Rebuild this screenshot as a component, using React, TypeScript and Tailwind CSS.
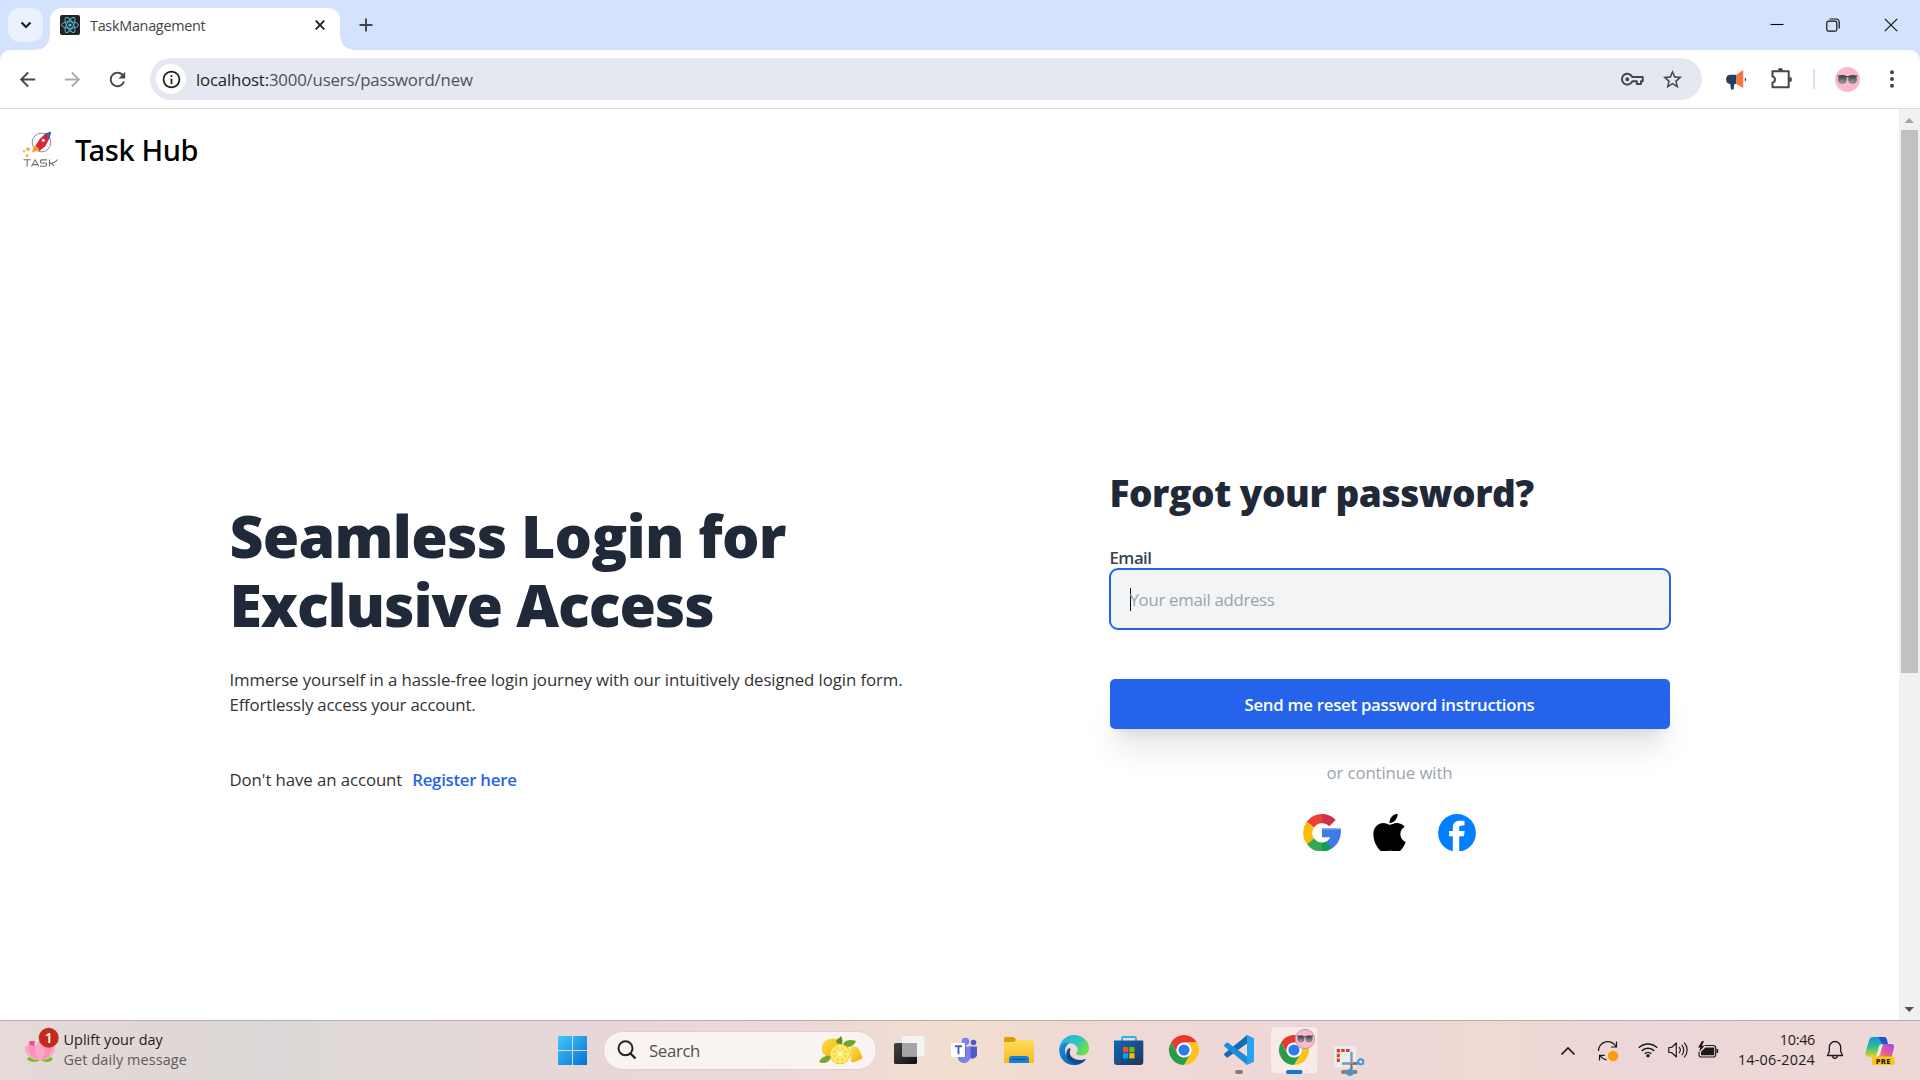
import type { ReactNode } from "react";
import { FaApple } from "react-icons/fa";

const REACT_BLUE = "#58c4dc";

function Favicon() {
  return (
    <svg viewBox="0 0 20 20" className="h-5 w-5">
      <rect width="20" height="20" rx="2" fill="#222" />
      <g fill="none" stroke={REACT_BLUE} strokeWidth="0.9">
        <ellipse cx="10" cy="10" rx="8.4" ry="3.3" />
        <ellipse cx="10" cy="10" rx="8.4" ry="3.3" transform="rotate(60 10 10)" />
        <ellipse cx="10" cy="10" rx="8.4" ry="3.3" transform="rotate(120 10 10)" />
      </g>
      <circle cx="10" cy="10" r="1.6" fill={REACT_BLUE} />
    </svg>
  );
}

function MaterialIcon({ d, className }: { d: string; className: string }) {
  return (
    <svg viewBox="0 0 24 24" fill="currentColor" className={className}>
      <path d={d} />
    </svg>
  );
}

const ARROW_BACK = "M20 11H7.83l5.59-5.59L12 4l-8 8 8 8 1.41-1.41L7.83 13H20v-2z";
const ARROW_FORWARD = "M12 4l-1.41 1.41L16.17 11H4v2h12.17l-5.58 5.59L12 20l8-8z";
const RELOAD =
  "M17.65 6.35C16.2 4.9 14.21 4 12 4c-4.42 0-7.99 3.58-7.99 8s3.57 8 7.99 8c3.73 0 6.84-2.55 7.73-6h-2.08c-.82 2.33-3.04 4-5.65 4-3.31 0-6-2.69-6-6s2.69-6 6-6c1.66 0 3.14.69 4.22 1.78L13 11h7V4l-2.35 2.35z";
const STAR =
  "M22 9.24l-7.19-.62L12 2 9.19 8.63 2 9.24l5.46 4.73L5.82 21 12 17.27 18.18 21l-1.63-7.03L22 9.24zM12 15.4l-3.76 2.27 1-4.28-3.32-2.88 4.38-.38L12 6.1l1.71 4.04 4.38.38-3.32 2.88 1 4.28L12 15.4z";
const INFO =
  "M11 7h2v2h-2zm0 4h2v6h-2zm1-9C6.48 2 2 6.48 2 12s4.480 10 10 10 10-4.480 10-10S17.520 2 12 2zm0 18c-4.410 0-8-3.590-8-8s3.590-8 8-8 8 3.590 8 8-3.590 8-8 8z";

function Glasses() {
  return (
    <>
      <defs>
        <linearGradient id="lens" x1="0" y1="0" x2="0" y2="1">
          <stop offset="0" stopColor="#2e3436" />
          <stop offset="1" stopColor="#a3acac" />
        </linearGradient>
      </defs>
      <circle cx="12.500" cy="12.500" r="12.500" fill="#f8b9cf" />
      <path d="M2.500 9h7.500c.8 0 1.300 1 2.500 1s1.700-1 2.500-1h7.500" fill="none" stroke="#2a2a2a" strokeWidth="1.200" />
      <circle cx="7.400" cy="12.300" r="4" fill="url(#lens)" stroke="#555" strokeWidth=".7" />
      <circle cx="17.600" cy="12.300" r="4" fill="url(#lens)" stroke="#555" strokeWidth=".7" />
    </>
  );
}

function TabStrip() {
  return (
    <div className="flex h-[50px] items-end">
      <div className="mb-2 ml-2 flex h-[34px] w-[35px] items-center justify-center rounded-xl bg-[#ebf1fe]">
        <svg viewBox="0 0 12 8" className="h-2 w-3" fill="none" stroke="#1f1f1f" strokeWidth="2.200">
          <path d="M1.500 1.500 6 6l4.500-4.500" />
        </svg>
      </div>
      <div className="flex items-end">
        <div className="-ml-[7px] h-[14px] w-[14px] bg-[radial-gradient(circle_at_0_0,transparent_13.500px,white_14px)]" />
        <div className="flex h-[42px] w-[290px] items-center rounded-t-xl bg-white pb-[8px]">
          <div className="ml-2.5">
            <Favicon />
          </div>
          <span className="ml-2.5 flex-1 pt-px text-[14.400px] tracking-[-0.280px] text-[#454545]">TaskManagement</span>
          <svg viewBox="0 0 10 10" className="mr-[15px] h-2.5 w-2.5" stroke="#1f1f1f" strokeWidth="1.900">
            <path d="M.7.700l8.600 8.600M9.300.700.7 9.300" />
          </svg>
        </div>
        <div className="h-[14px] w-[14px] bg-[radial-gradient(circle_at_100%_0,transparent_13.500px,white_14px)]" />
      </div>
      <svg viewBox="0 0 14 14" className="mb-[18px] ml-[4.500px] h-3.5 w-3.5" stroke="#444" strokeWidth="1.900">
        <path d="M7 .5v13M.5 7h13" />
      </svg>
      <div className="mb-[18px] ml-auto flex items-center">
        <svg viewBox="0 0 14 14" className="h-3.5 w-3.5" stroke="#000" strokeWidth="1.100">
          <path d="M.5 6.500h13" />
        </svg>
        <svg viewBox="0 0 14 14" className="ml-[42px] h-3.5 w-3.5" fill="none" stroke="#111" strokeWidth="1.200">
          <rect x=".8" y="3.200" width="10" height="10" rx="1.800" />
          <path d="M3.500 1h6.700a3 3 0 0 1 3 3v6.500" />
        </svg>
        <svg viewBox="0 0 14 14" className="ml-11 mr-[22px] h-3.5 w-3.5" stroke="#111" strokeWidth="1.200">
          <path d="M.8.800l12.400 12.400M13.200.800.8 13.200" />
        </svg>
      </div>
    </div>
  );
}

function Toolbar() {
  return (
    <div className="flex h-[59px] items-center rounded-t-[10px] border-b border-[#dcdcdc] bg-white text-[#474747]">
      <MaterialIcon d={ARROW_BACK} className="ml-4 h-[23px] w-[23px]" />
      <MaterialIcon d={ARROW_FORWARD} className="ml-[22px] h-[23px] w-[23px] text-[#ababab]" />
      <MaterialIcon d={RELOAD} className="ml-[22px] h-[23px] w-[23px]" />
      <div className="ml-[21px] flex h-[42px] w-[1552px] items-center rounded-full bg-[#e5e8f1]">
        <div className="ml-1.5 flex h-[30px] w-[30px] items-center justify-center rounded-full bg-white">
          <MaterialIcon d={INFO} className="h-[21px] w-[21px] text-[#1f1f1f]" />
        </div>
        <span className="ml-2.5 flex-1 pt-px text-[16.800px] tracking-[-0.180px] text-[#4f5257]">
          <span className="text-[#1f1f1f]">localhost:</span>3000/users/password/new
        </span>
        <svg viewBox="0 0 24 16" className="mr-[17px] h-4 w-6" fill="none" stroke="#474747" strokeWidth="2">
          <path d="M12.300 6h10.400v4.300h-1.700v2.700h-4.200v-2.700h-4.500A5.400 5.400 0 1 1 12.300 6z" strokeLinejoin="round" />
          <circle cx="7.300" cy="8.200" r="1.300" fill="#474747" stroke="none" />
          <circle cx="7.300" cy="8.200" r="1" />
        </svg>
        <MaterialIcon d={STAR} className="mr-[18px] h-[23px] w-[23px]" />
      </div>
      <svg viewBox="0 0 22 22" className="ml-[23px] mt-0.5 h-[22px] w-[22px]">
        <path d="M5 5.700h6.500v9.300H9.300l-.6 5.500H6l-.8-5.500A4.700 4.700 0 0 1 5 5.700z" fill="#25405a" />
        <path d="M11.500 5.700 18.200 1v18l-6.700-4z" fill="#ff6f3c" />
        <path d="M19.800 8.500a2 2 0 0 1 0 3.800z" fill="#25405a" />
      </svg>
      <svg viewBox="0 0 24 24" className="ml-[22px] h-6 w-6" fill="none" stroke="#474747" strokeWidth="2">
        <path d="M3.500 4.300h16.200v16H3.500v-4.500a3.300 3.300 0 0 0 0-6.400z" strokeLinejoin="round" />
        <path d="M8.800 3.700a2.600 2.600 0 0 1 5.200 0zM20.300 9.800a2.600 2.600 0 0 1 0 5.200z" fill="#474747" stroke="none" />
      </svg>
      <div className="ml-5 h-5 w-0.5 bg-[#d3e3fd]" />
      <svg viewBox="0 0 25 25" className="ml-5 h-[25px] w-[25px]">
        <Glasses />
      </svg>
      <svg viewBox="0 0 6 20" className="ml-[29px] h-5 w-1.5" fill="#444">
        <circle cx="3" cy="3.300" r="2" />
        <circle cx="3" cy="10" r="2" />
        <circle cx="3" cy="16.700" r="2" />
      </svg>
    </div>
  );
}

function TaskLogo() {
  return (
    <svg viewBox="0 0 36 36" className="-mt-0.5 h-9 w-9">
      <circle cx="18.500" cy="11.500" r="9.300" fill="none" stroke="#8b8d90" strokeWidth="1" />
      <path d="M22.500 2.500 28 .8l-1.300 6-4.200 8.200-6 5-4.500-4.500 4.700-7.500z" fill="#d8263a" />
      <path d="M21.500 2.800 28 .8l-1.400 6.600z" fill="#1d6fb8" />
      <circle cx="20.300" cy="9.300" r="1.900" fill="#fff" stroke="#93203a" strokeWidth=".6" />
      <path d="M12.500 14.500c-2 1-2.700 3.500-3.300 7 3.300-.8 5.600-1.800 6.800-3.700z" fill="#f7992b" />
      <path d="m5 15.500.8 1.700 1.800.2-1.300 1.300.3 1.800L5 19.600l-1.600.9.300-1.800-1.300-1.300 1.800-.2zM1 18.500l.5 1 1 .2-.7.8.1 1-.9-.5-.9.500.1-1-.7-.8 1-.2zM4 22.500l.6 1.300 1.300.2-1 1 .3 1.400-1.200-.7-1.200.7.300-1.400-1-1 1.300-.2z" fill="#f6a545" />
      <g fill="none" stroke="#6d6f72" strokeWidth="1.100">
        <path d="M.5 28.800h7.200M4.200 28.800V35.500M8.500 35.500l3.600-6.700 3.600 6.700M10 33.600h4.300M24 28.900h-5.500c-1.500 0-1.500 3.100 0 3.100h4c1.500 0 1.500 3.200 0 3.200H17M26.500 28.500v7M34.500 28.500c-2 3-4.500 3.700-7.500 3.700 2 0 2.800.6 4 2.800" />
      </g>
    </svg>
  );
}

function GoogleLogo() {
  return (
    <svg viewBox="0 0 38 37" className="h-[37px] w-[38px]">
      <path d="M19 0A18.900 18.900 0 0 0 3.700 7.800L11 13.500A9.800 9.800 0 0 1 19 9.200z" fill="#ea4335" />
      <path d="M19 0A18.900 18.900 0 0 1 32.700 5.900L26.300 12.300A9.800 9.800 0 0 0 19 9.200z" fill="#d0304a" />
      <path d="M3.700 7.800A18.900 18.900 0 0 0 4 30.200L11 24.300A9.800 9.800 0 0 1 11 13.500z" fill="#fbbc05" />
      <path d="M4 30.200A18.900 18.900 0 0 0 19 37.800V28.600A9.800 9.800 0 0 1 11 24.300z" fill="#34a853" />
      <path d="M19 37.800A18.900 18.900 0 0 0 29.500 34L24 27.300A9.800 9.800 0 0 1 19 28.600z" fill="#109d58" />
      <path d="M19 14.400H37.700C38.800 22.500 35.500 30 29.300 34.200L22.700 28C25 26.800 26.500 25 27.300 23.200H19z" fill="#4179e8" />
      <path d="M19 14.400H37.700l.1 1H19z" fill="#7ea8f3" />
    </svg>
  );
}

function FacebookLogo() {
  return (
    <svg viewBox="0 0 38 37" className="h-[37px] w-[38px]">
      <circle cx="19" cy="18.900" r="18.900" fill="#007fff" />
      <path d="M14.800 38V22.300H11V17h3.800v-3.200c0-4.500 2.600-7.100 6.800-7.100h4.900v4.800h-3c-1.600 0-2.300.8-2.300 2.400V17h5.500l-.9 5.300h-4.600V38z" fill="#fff" />
    </svg>
  );
}

function Page() {
  return (
    <div className="flex h-[911px] bg-white">
      <div className="flex-1">
        <header className="flex h-[82px] items-center pl-[23px]">
          <TaskLogo />
          <span className="ml-4 font-['Noto_Sans','Open_Sans',sans-serif] text-[29px] font-medium tracking-[-0.400px] text-black">Task Hub</span>
        </header>
        <main className="flex pl-[229.500px]">
          <section className="mt-[310px] w-[880px] text-[#333]">
            <h1 className="text-[59px] font-extrabold leading-[68.750px] text-[#1f2937]">
              <span className="block tracking-[-0.740px]">Seamless Login for</span>
              <span className="block tracking-[-1.080px]">Exclusive Access</span>
            </h1>
            <p className="mt-[28.500px] text-[16.800px] leading-[25px]">
              <span className="block tracking-[-0.080px]">
                Immerse yourself in a hassle-free login journey with our intuitively designed login form.
              </span>
              <span className="block tracking-[-0.180px]">Effortlessly access your account.</span>
            </p>
            <p className="mt-[50px] text-[16.800px] leading-[25px] tracking-[-0.080px]">
              Don't have an account
              <a className="ml-2.5 font-semibold tracking-[-0.260px] text-[#2563eb]">Register here</a>
            </p>
          </section>
          <section className="mt-[279px] w-[560px]">
            <h2 className="text-[37px] font-extrabold leading-[45px] tracking-[-0.450px] text-[#1f2937]">Forgot your password?</h2>
            <label className="mt-[30px] block h-[23px] text-[16.800px] font-semibold leading-[25px] tracking-[-0.500px] text-[#374151]">Email</label>
            <div className="-mx-px flex h-[62px] items-center rounded-[9px] border-2 border-[#2563eb] bg-[#f3f4f6] pl-[19px]">
              <div className="-mr-px h-[23px] w-px bg-[#111]" />
              <span className="pt-px text-[16.800px] tracking-[-0.290px] text-[#9ca3af]">Your email address</span>
            </div>
            <button className="mt-[49px] block h-[50px] w-full rounded-[5px] bg-[#2563eb] pt-px text-[16.800px] font-semibold tracking-[-0.270px] text-white shadow-[0_25px_31px_-6px_rgba(0,0,0,0.1),0_10px_12.500px_-7.500px_rgba(0,0,0,0.1)]">
              Send me reset password instructions
            </button>
            <p className="mt-[31px] text-center text-[16.800px] leading-[25px] tracking-[-0.120px] text-[#9ca3af]">or continue with</p>
            <div className="mt-[29px] flex pl-[193.500px]">
              <GoogleLogo />
              <div className="ml-8 flex h-[37px] w-[33px] items-start justify-center overflow-hidden text-black">
                <FaApple className="-mt-[3px] h-[44px] w-[33px] shrink-0" />
              </div>
              <div className="ml-8">
                <FacebookLogo />
              </div>
            </div>
          </section>
        </main>
      </div>
      <div className="flex w-[21px] flex-col items-center bg-[#f1f1f1]">
        <svg viewBox="0 0 21 21" className="h-[21px] w-[21px]" fill="#a3a3a3">
          <path d="M5.500 14h9.500l-4.750-5z" />
        </svg>
        <div className="h-[543px] w-[17px] bg-[#c1c1c1]" />
        <svg viewBox="0 0 21 21" className="mt-auto h-[21px] w-[21px]" fill="#505050">
          <path d="M5.500 8h9.500l-4.750 5z" />
        </svg>
      </div>
    </div>
  );
}

function Cell({ children }: { children: ReactNode }) {
  return (
    <svg viewBox="0 0 55 60" className="-mt-px h-[60px] w-[55px]">
      {children}
    </svg>
  );
}

function ChromeDisc() {
  return (
    <>
      <circle cx="28" cy="30" r="15" fill="#fff" />
      <path d="M15 22.500A15 15 0 0 1 41 22.500H28A7.500 7.500 0 0 0 21.500 33.750z" fill="#e33b2e" />
      <path d="M41 22.500A15 15 0 0 1 28 45L34.500 33.750A7.500 7.500 0 0 0 28 22.500z" fill="#fcc31e" />
      <path d="M28 45A15 15 0 0 1 15 22.500L21.500 33.750A7.500 7.500 0 0 0 34.500 33.750z" fill="#2a9c47" />
      <circle cx="28" cy="30" r="7.300" fill="#fff" />
      <circle cx="28" cy="30" r="5.600" fill="#2f7bed" />
    </>
  );
}

function Lemons() {
  return (
    <svg viewBox="0 0 44 29" className="h-[29px] w-11">
      <defs>
        <linearGradient id="lemon" x1="0" y1="0" x2="1" y2="1">
          <stop offset="0" stopColor="#ffe04a" />
          <stop offset="1" stopColor="#f2ac05" />
        </linearGradient>
      </defs>
      <path d="M3 10C4 4 12 1 19 3l2 9-8 10C5 21 2 16 3 10z" fill="url(#lemon)" />
      <path d="M31 11c5-2 9 0 10 5 1 2 3 5 2 7-3 0-6 4-11 3z" fill="url(#lemon)" />
      <path d="M17 5c1-2 4-3 5-5 1 2 2 4 1 8-3 1-5-1-6-3z" fill="#5b8f1f" />
      <path d="M24 8c2-4 8-5 13-3-2 5-7 7-12 6z" fill="#6fa52a" />
      <path d="M0 26c2-5 7-7 12-6 0 5-6 9-12 6z" fill="#77a832" />
      <circle cx="21" cy="18" r="10.300" fill="#f7cf1d" />
      <circle cx="21" cy="18" r="9" fill="#fff6bd" />
      <circle cx="21" cy="18" r="8" fill="#f9dd3c" />
      <path d="M21 10v16M13 18h16M15.400 12.400l11.200 11.200M26.600 12.400 15.400 23.600" stroke="#fff6bd" strokeWidth="1.100" />
    </svg>
  );
}

function TaskbarIcons() {
  return (
    <>
      <Cell>
        <defs>
          <linearGradient id="tvd" x1="0" y1="0" x2="1" y2="1">
            <stop offset="0" stopColor="#444" />
            <stop offset="1" stopColor="#111" />
          </linearGradient>
        </defs>
        <rect x="13" y="23" width="23" height="21" rx="1.500" fill="url(#tvd)" />
        <rect x="21" y="16" width="22.500" height="20.500" rx="1" fill="#f4f4f4" fillOpacity=".92" />
        <path d="M21 23h15v13.500H21z" fill="#a4a4a4" />
      </Cell>
      <Cell>
        <circle cx="29.500" cy="21.500" r="3.800" fill="#7b83eb" />
        <circle cx="37.500" cy="22.500" r="2.800" fill="#5059c9" />
        <path d="M33 26.500h8v8.500a4.500 4.500 0 0 1-8 2z" fill="#5059c9" />
        <path d="M22 26.500h12.500V36a6.500 6.500 0 0 1-12.500 3z" fill="#7b83eb" />
        <path d="M25 24h5v13h-5z" fill="#4a52ad" fillOpacity=".5" />
        <rect x="15" y="23" width="14" height="14" fill="#fff" />
        <path d="M19 26.200h7M22.500 26.200v8" stroke="#5059c9" strokeWidth="1.900" />
      </Cell>
      <Cell>
        <defs>
          <linearGradient id="folder" x1="0" y1="0" x2="0" y2="1">
            <stop offset="0" stopColor="#ffdc5e" />
            <stop offset="1" stopColor="#fbb91c" />
          </linearGradient>
        </defs>
        <path d="M13 18.500a1.500 1.500 0 0 1 1.500-1.500h8l3 3v6H13z" fill="#dd9d05" />
        <path d="M13 22h9.500l3-2H41.500a1.500 1.500 0 0 1 1.500 1.500V43H13z" fill="url(#folder)" />
        <path d="M18 43v-4a3 3 0 0 1 3-3h14a3 3 0 0 1 3 3v4z" fill="#1583d4" />
        <path d="M21.500 39.500h13" stroke="#0b5797" strokeWidth="1.300" />
      </Cell>
      <Cell>
        <defs>
          <linearGradient id="edgeTop" x1="0" y1="0" x2="1" y2=".5">
            <stop offset="0" stopColor="#28a8e8" />
            <stop offset=".6" stopColor="#2fc3c6" />
            <stop offset="1" stopColor="#6be04c" />
          </linearGradient>
          <linearGradient id="edgeLow" x1="0" y1="0" x2="1" y2="1">
            <stop offset="0" stopColor="#1493e0" />
            <stop offset="1" stopColor="#0c53a5" />
          </linearGradient>
        </defs>
        <path d="M13.200 28.500C14 20.500 20.500 15 28 15c8.500 0 15 6 15 13 0 5-3.500 7.500-8 7.500-3.500 0-5-1.300-5-2.200 0-1 1.500-1.300 1.500-4 0-3.500-3.500-6-7.500-6-6 0-9 2.700-10.800 5.200z" fill="url(#edgeTop)" />
        <path d="M13.200 28.500c1.800-4.500 6-6.300 10.800-5.500-3 1-5 4-5 7.500 0 8 8 12 15.500 10.500 2.500-.5 4-1.300 5.500-2C37.500 43 33 45 28 45c-9 0-15.500-7.500-14.800-16.500z" fill="url(#edgeLow)" />
        <path d="M24.500 29.500c-3.500 6.500 5 13 15.300 9.500-3 4.500-9 6-14 3.500-5-2-7.500-9-3.800-13.500 1-1.300 2.500-1 2.500.5z" fill="#114a8b" />
        <path d="M28 25.500c2.500.6 3.700 2.500 3.500 4.300-.2 2-1.500 2.500-1.500 3.500-1.500-.3-4-1.500-4-4.300 0-1.500.8-2.700 2-3.500z" fill="#eedcda" />
      </Cell>
      <Cell>
        <defs>
          <linearGradient id="store" x1="0" y1="0" x2="1" y2="1">
            <stop offset="0" stopColor="#0f69b8" />
            <stop offset="1" stopColor="#22355d" />
          </linearGradient>
        </defs>
        <path d="M21 22v-3.500a1.500 1.500 0 0 1 1.500-1.500h11a1.500 1.500 0 0 1 1.500 1.500V22" fill="none" stroke="#27b2ee" strokeWidth="1.800" />
        <path d="M13 20.500h29.300V42a3 3 0 0 1-3 3H16a3 3 0 0 1-3-3z" fill="url(#store)" />
        <path d="M22 27h5.200v5.200H22z" fill="#f25022" />
        <path d="M28.300 27h5.200v5.200h-5.200z" fill="#7fba00" />
        <path d="M22 33.200h5.200v5.200H22z" fill="#00a4ef" />
        <path d="M28.300 33.200h5.200v5.200h-5.200z" fill="#ffb900" />
      </Cell>
      <Cell>
        <ChromeDisc />
      </Cell>
      <Cell>
        <path d="M36 15.300 36 23.500 17 37.200c-.5.400-1 .3-1.500 0L13.400 35.300c-.5-.5-.5-1.200 0-1.700z" fill="#0f6cb5" />
        <path d="M36 44.700 36 36.500 17 22.800c-.5-.4-1-.3-1.500 0L13.400 24.700c-.5.500-.5 1.200 0 1.700z" fill="#1c8bd8" />
        <path d="M36 15 43 18.300V41.700L36 45c-.8.200-1.500-.1-2-.7.800.6 2 .2 2-1V16.700c0-1.200-1.200-1.600-2-1 .5-.6 1.200-.9 2-.7z" fill="#29a2f2" />
        <rect x="24" y="50" width="8" height="4" rx="2" fill="#8a7d7d" />
      </Cell>
      <Cell>
        <rect x="4.500" y="6.500" width="47.500" height="47.500" rx="5" fill="#f7eae8" stroke="#e8d5d4" />
        <ChromeDisc />
        <g transform="translate(29 9) scale(.8)">
          <Glasses />
          <circle cx="12.500" cy="12.500" r="12" fill="none" stroke="#b58d9b" />
        </g>
        <rect x="20" y="50" width="16.500" height="4" rx="2" fill="#0f77d1" />
      </Cell>
      <Cell>
        <rect x="13" y="26" width="22" height="21.500" rx="2.500" fill="#e9eef2" />
        <path d="M17.300 42V30.500H30" fill="none" stroke="#d5421a" strokeWidth="3" strokeDasharray="3.500 1.300" />
        <rect x="20" y="50" width="16.500" height="4" rx="2" fill="#8a7d7d" />
        <path d="M30.500 32v12.500M21 43.500H36.500" stroke="#8a939a" strokeWidth="2.300" />
        <path d="M30.500 44v4l-1 2.500M32 43.500h4.500" stroke="#6b747b" strokeWidth="2.300" fill="none" />
        <circle cx="39.800" cy="41.800" r="2.600" fill="none" stroke="#2ba0df" strokeWidth="1.900" />
        <circle cx="29" cy="52.500" r="2.600" fill="none" stroke="#2ba0df" strokeWidth="1.900" />
      </Cell>
    </>
  );
}

function Tray() {
  return (
    <>
      <svg viewBox="0 0 16 10" className="ml-auto h-2.5 w-4" fill="none" stroke="#1a1a1a" strokeWidth="1.700">
        <path d="M1.500 8.500 8 2l6.500 6.500" />
      </svg>
      <svg viewBox="0 0 22 22" className="ml-[21px] h-[22px] w-[22px]" fill="none" stroke="#1a1a1a" strokeWidth="1.200">
        <path d="M1.500 11A9.300 9.300 0 0 1 19 6.500M19.500 1.500v5.500h-5.500M9.500 19.800A9.300 9.300 0 0 1 3 15.500M2.500 20.500v-5.200h5.300" />
        <circle cx="16" cy="16" r="5.200" fill="#ff9a0b" stroke="none" />
      </svg>
      <svg viewBox="0 0 20 16" className="-mt-0.5 ml-[19px] h-4 w-5" fill="none" stroke="#1a1a1a" strokeWidth="1.500">
        <path d="M.8 5.800a13 13 0 0 1 18.400 0M3.800 8.900a8.800 8.800 0 0 1 12.400 0M6.700 11.800a4.700 4.700 0 0 1 6.600 0" />
        <circle cx="10" cy="13.800" r="1.700" fill="#1a1a1a" stroke="none" />
      </svg>
      <svg viewBox="0 0 20 16" className="-mt-0.5 ml-2.5 h-4 w-5" fill="none" stroke="#1a1a1a" strokeWidth="1.200">
        <path d="M.8 5.500h2.700L8.300 1v14l-4.800-4.500H.8z" strokeLinejoin="round" />
        <path d="M11 5a4.500 4.500 0 0 1 0 6M13.700 2.800a7.500 7.500 0 0 1 0 10.400M16.200.700a10.500 10.500 0 0 1 0 14.600" />
      </svg>
      <svg viewBox="0 0 21 17" className="-mt-[3px] ml-2.5 h-[17px] w-[21px]">
        <path d="M6.500 4.500h9A2.200 2.200 0 0 1 17.700 6.700v7A2.200 2.200 0 0 1 15.500 16H3.200A2.200 2.200 0 0 1 1 13.700V11" fill="none" stroke="#1a1a1a" strokeWidth="1.200" />
        <path d="M7.500 6.500h8.700v7.700H3v-3.500z" fill="#1a1a1a" />
        <path d="M4 0 0 6.500h2.300L1.200 11 6.500 4.800H4L6 0zM18.500 8h1.700v4h-1.700z" fill="#1a1a1a" />
      </svg>
      <div className="-mt-px ml-3 mr-px w-[84px] text-right text-[14.400px] leading-5 text-[#1c1c1c]">
        <div className="tracking-[-0.300px]">10:46</div>
        <div className="tracking-[0.200px]">14-06-2024</div>
      </div>
      <svg viewBox="0 0 18 20" className="-mt-0.5 ml-2.5 h-5 w-[18px]" fill="none" stroke="#1a1a1a" strokeWidth="1.300">
        <path d="M9 1.500a5.700 5.700 0 0 0-5.700 5.700v4.300L1.500 15.500h15l-1.800-4V7.200A5.700 5.700 0 0 0 9 1.500zM6.700 16a2.300 2.300 0 0 0 4.600 0" strokeLinejoin="round" />
      </svg>
      <svg viewBox="0 0 30 28" className="ml-[21px] mr-[25px] h-7 w-[30px]">
        <defs>
          <linearGradient id="cpA" x1="0" y1="0" x2="0" y2="1">
            <stop offset="0" stopColor="#1a8fe8" />
            <stop offset=".5" stopColor="#2fc08c" />
            <stop offset="1" stopColor="#f3d021" />
          </linearGradient>
          <linearGradient id="cpB" x1="1" y1="0" x2="0" y2="1">
            <stop offset="0" stopColor="#9a4df5" />
            <stop offset=".6" stopColor="#ec5a93" />
            <stop offset="1" stopColor="#fba04c" />
          </linearGradient>
        </defs>
        <path d="M8 0h10c3 0 3 3 4 6l-5 1-4 10c-.6 2-2 3-4 3H4c-3 0-4-2.500-3.300-5L4 3.500C4.700 1 6 0 8 0z" fill="url(#cpA)" />
        <path d="M13 0h6c3 0 3 3 4 7h-5c-2 0-2-4-5-7z" fill="#1b50d8" />
        <path d="M18 7h8c3 0 3.500 2 2.800 4.500L26.500 20H12l3-2z" fill="url(#cpB)" />
        <path d="m14 8.500 3.500-1.500-3.200 10c-.5 1.700-1.300 2.500-3 3z" fill="#fff" fillOpacity=".75" />
        <rect x="7" y="19.500" width="22.500" height="8.500" rx="1.500" fill="#fbc911" />
        <text x="18.300" y="26.600" textAnchor="middle" fontSize="7.500" fontWeight="800" letterSpacing=".4" fill="#222">PRE</text>
      </svg>
    </>
  );
}

function Lotus() {
  return (
    <svg viewBox="0 0 36 44" className="ml-[24px] h-11 w-9 self-start">
      <path d="M3 38c3-4 9-4 14 0-3 4-11 4-14 0zM29 38c-3-4-8-4-13 0 3 4 11 4 13 0z" fill="#6cc61a" />
      <path d="M1 25c5-1 9 2 11 6l4 8C6 40 0 33 1 25zM31 25c-5-1-9 2-11 6l-4 8c10 1 16-6 15-14z" fill="#f9abbf" />
      <path d="M5 21c6 0 10 6 11 18C7 38 2 30 5 21zM27 21c-6 0-10 6-11 18 9-1 14-9 11-18z" fill="#fc92ba" />
      <path d="M16 19c6 6 7 13 0 20.500-7-7.500-6-14.500 0-20.500z" fill="#ffa6c8" />
      <path d="M5.500 20h5.500l-1 5-4.500-1.500z" fill="#f2489b" />
      <circle cx="24.700" cy="16.700" r="10" fill="#c42b1c" />
      <text x="24.700" y="21.700" textAnchor="middle" fontSize="14" fontWeight="600" fill="#fff">1</text>
    </svg>
  );
}

function Taskbar() {
  return (
    <div className="flex h-[60px] items-center border-t border-[#b5abaa] bg-[linear-gradient(90deg,#e6dad8_0%,#e1d8d7_5%,#ddd8d7_14%,#e1d9d8_22%,#e9d7d8_32%,#edd8d8_41%,#f0dcd2_47%,#f2decf_50%,#efd9d5_56%,#eed7d7_70%,#eed9d3_78%,#edd6d7_85%,#edd8d7_100%)]">
      <Lotus />
      <div className="-mt-px ml-[3.500px] w-[494.500px] text-[14.400px] leading-5">
        <div className="tracking-[0.050px] text-[#1c1c1c]">Uplift your day</div>
        <div className="tracking-[0.120px] text-[#5f5b5b]">Get daily message</div>
      </div>
      <svg viewBox="0 0 29 29" className="h-[29px] w-[29px]">
        <defs>
          <linearGradient id="win" x1="0" y1="0" x2="1" y2="1">
            <stop offset="0" stopColor="#43c8fb" />
            <stop offset="1" stopColor="#0571d3" />
          </linearGradient>
        </defs>
        <path d="M0 0h14v14H0zM15 0h14v14H15zM0 15h14v14H0zM15 15h14v14H15z" fill="url(#win)" />
      </svg>
      <div className="-mt-px ml-4 mr-1 flex h-[39px] w-[274px] items-center rounded-full border border-[#e3cfcf] bg-[#f9f3f2]">
        <svg viewBox="0 0 20 20" className="ml-[13px] h-5 w-5" fill="none" stroke="#222" strokeWidth="2">
          <circle cx="8.500" cy="8.300" r="7" />
          <path d="m13.500 13.500 5 5" strokeWidth="2.400" />
        </svg>
        <span className="ml-3 flex-1 pt-0.5 text-[16.800px] tracking-[-0.350px] text-[#55504f]">Search</span>
        <div className="mr-[13px]">
          <Lemons />
        </div>
      </div>
      <TaskbarIcons />
      <Tray />
    </div>
  );
}

export default function App() {
  return (
    <div className="flex h-[1080px] w-[1920px] flex-col overflow-hidden bg-[#d3e3fd] font-['Open_Sans','Noto_Sans',sans-serif]">
      <TabStrip />
      <Toolbar />
      <Page />
      <Taskbar />
    </div>
  );
}
